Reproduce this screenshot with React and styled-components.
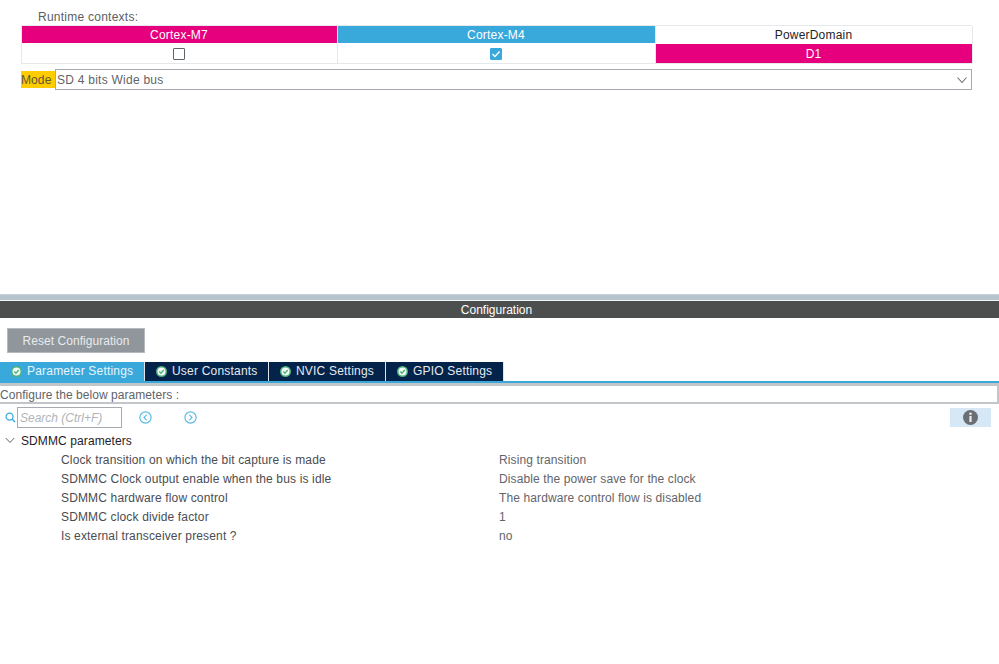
import React from "react";
import styled, { createGlobalStyle } from "styled-components";

const GlobalStyle = createGlobalStyle`
  html, body {
    margin: 0;
    padding: 0;
    background: #fff;
    font-family: "Liberation Sans", Arial, sans-serif;
    font-size: 12px;
    overflow: hidden;
  }
`;

const Page = styled.div`
  width: 999px;
  height: 664px;
  display: flex;
  flex-direction: column;
`;

const TopPanel = styled.section`
  height: 294px;
  padding: 10px 27px 0 21px;
  box-sizing: border-box;
`;

const ContextsLabel = styled.div`
  height: 15px;
  line-height: 15px;
  padding-left: 17px;
  color: #5a5f63;
  letter-spacing: 0.25px;
`;

const ContextTable = styled.div`
  display: grid;
  grid-template-columns: 316px 318px 317px;
  grid-template-rows: 17px 20px;
  box-sizing: border-box;
  border: 1px solid #e6e9ec;
  width: 951px;
  height: 39px;
`;

const Cell = styled.div`
  display: flex;
  align-items: center;
  justify-content: center;
  padding-right: 1px;
  background: ${(p) => p.$bg || "#fff"};
  background-clip: padding-box;
  color: ${(p) => p.$color || "#fff"};
  border-right: 1px solid #e6e9ec;
  border-top: ${(p) => (p.$gap ? "1px solid #fff" : "0")};
  box-sizing: border-box;
  letter-spacing: 0.2px;
`;

const CheckBox = styled.span`
  display: flex;
  align-items: center;
  justify-content: center;
  width: 12px;
  height: 12px;
  box-sizing: border-box;
  border: 1px solid ${(p) => (p.$on ? "#39a9dc" : "#5f6468")};
  border-radius: 1px;
  background: ${(p) => (p.$on ? "#39a9dc" : "#fff")};
`;

const ModeRow = styled.div`
  display: flex;
  align-items: center;
  margin-top: 5px;
  width: 951px;
  height: 21px;
`;

const ModeLabel = styled.div`
  width: 34px;
  height: 17px;
  line-height: 18px;
  background: #ffcc00;
  color: #5c5a3a;
  letter-spacing: 0.1px;
`;

const ModeSelect = styled.div`
  flex: 1;
  height: 21px;
  box-sizing: border-box;
  display: flex;
  align-items: center;
  justify-content: space-between;
  border: 1px solid #a5abb0;
  padding: 1px 3px 0 1px;
  color: #5f6468;
  letter-spacing: 0.25px;
`;

const Divider = styled.div`
  height: 7px;
  box-sizing: border-box;
  background: #b8c4cc;
  border-top: 1px solid #c9d2d8;
  border-bottom: 1px solid #f0f2f3;
`;

const ConfigBar = styled.div`
  height: 17px;
  line-height: 19px;
  background: #4d4f4e;
  color: #fff;
  text-align: center;
  padding-right: 6px;
`;

const ResetButton = styled.button`
  display: block;
  width: 138px;
  height: 25px;
  margin: 10px 0 9px 7px;
  padding: 1px 0 0;
  border: 1px solid #b4b9be;
  background: #8f969c;
  color: #e9ebed;
  font: 12px "Liberation Sans", Arial, sans-serif;
  letter-spacing: 0.05px;
`;

const TabStrip = styled.div`
  display: flex;
  height: 19px;
  border-bottom: 2px solid #39a9dc;
`;

const Tab = styled.div`
  display: flex;
  align-items: center;
  gap: 5px;
  box-sizing: border-box;
  width: ${(p) => p.$w}px;
  padding: 0 0 1px ${(p) => p.$pad}px;
  background: ${(p) => (p.$active ? "#39a9dc" : "#03234b")};
  color: ${(p) => (p.$active ? "#e8f5fb" : "#e6eaee")};
  border-right: 1px solid #dfe4e8;
  letter-spacing: 0.2px;
`;

const ConfigureRow = styled.div`
  height: 21px;
  line-height: 19px;
  box-sizing: border-box;
  border-top: 3px solid #c3c6c8;
  border-bottom: 2px solid #c3c6c8;
  border-right: 2px solid #c3c6c8;
  color: #5f6468;
  letter-spacing: 0.05px;
`;

const SearchRow = styled.div`
  display: flex;
  align-items: center;
  height: 27px;
  padding: 0 8px 0 5px;
`;

const SearchBox = styled.div`
  width: 105px;
  height: 21px;
  line-height: 20px;
  box-sizing: border-box;
  margin-left: 1px;
  padding-left: 2px;
  border: 1px solid #a5abb0;
  color: #b0b4b8;
  font-style: italic;
`;

const NavIcon = styled.svg`
  margin-left: ${(p) => p.$gap}px;
`;

const InfoButton = styled.div`
  margin-left: auto;
  width: 41px;
  height: 19px;
  display: flex;
  align-items: center;
  justify-content: center;
  background: #d6e7f5;
`;

const GroupHeader = styled.div`
  display: flex;
  align-items: center;
  height: 20px;
  padding: 0 0 1px 5px;
  box-sizing: border-box;
  gap: 6px;
  color: #1f2226;
  letter-spacing: 0.1px;
`;

const ParamRow = styled.div`
  display: grid;
  grid-template-columns: 438px 1fr;
  height: 19px;
  line-height: 19px;
  padding-left: 61px;
  color: #4a4c52;
  letter-spacing: 0.15px;
`;

const ParamValue = styled.span`
  color: #62656a;
  letter-spacing: 0.11px;
`;

const StatusIcon = () => (
  <svg width="11" height="11" viewBox="0 0 11 11">
    <circle cx="5.5" cy="5.5" r="5.5" fill="#4cb27a" />
    <circle cx="5.5" cy="5.5" r="4" fill="#f2faf6" />
    <path d="M3.3 5.6l1.6 1.6 2.9-3.1" fill="none" stroke="#4cb27a" strokeWidth="1.4" />
  </svg>
);

const ArrowIcon = ({ dir, gap }) => (
  <NavIcon $gap={gap} width="13" height="13" viewBox="0 0 13 13">
    <circle cx="6.5" cy="6.5" r="5.6" fill="none" stroke="#5cbce6" strokeWidth="1.2" />
    <path
      d={dir === "left" ? "M7.6 3.9L5 6.5l2.6 2.6" : "M5.4 3.9L8 6.5 5.4 9.1"}
      fill="none"
      stroke="#5cbce6"
      strokeWidth="1.2"
    />
  </NavIcon>
);

const tabs = [
  { label: "Parameter Settings", w: 145, pad: 11, active: true },
  { label: "User Constants", w: 124, pad: 11 },
  { label: "NVIC Settings", w: 117, pad: 11 },
  { label: "GPIO Settings", w: 118, pad: 11 },
];

const params = [
  ["Clock transition on which the bit capture is made", "Rising transition"],
  ["SDMMC Clock output enable when the bus is idle", "Disable the power save for the clock"],
  ["SDMMC hardware flow control", "The hardware control flow is disabled"],
  ["SDMMC clock divide factor", "1"],
  ["Is external transceiver present ?", "no"],
];

export default function App() {
  return (
    <Page>
      <GlobalStyle />
      <TopPanel>
        <ContextsLabel>Runtime contexts:</ContextsLabel>
        <ContextTable>
          <Cell $bg="#e6007e">Cortex-M7</Cell>
          <Cell $bg="#39a9dc">Cortex-M4</Cell>
          <Cell $color="#1f2226">PowerDomain</Cell>
          <Cell $gap>
            <CheckBox />
          </Cell>
          <Cell $gap>
            <CheckBox $on>
              <svg width="10" height="10" viewBox="0 0 10 10">
                <path d="M1.5 5l2.4 2.4L8.6 2.4" fill="none" stroke="#fff" strokeWidth="1.4" />
              </svg>
            </CheckBox>
          </Cell>
          <Cell $gap $bg="#e6007e">D1</Cell>
        </ContextTable>
        <ModeRow>
          <ModeLabel>Mode</ModeLabel>
          <ModeSelect>
            SD 4 bits Wide bus
            <svg width="12" height="8" viewBox="0 0 12 8">
              <path d="M1.5 1.5L6 6.5l4.5-5" fill="none" stroke="#6a6f73" strokeWidth="1.1" />
            </svg>
          </ModeSelect>
        </ModeRow>
      </TopPanel>
      <Divider />
      <ConfigBar>Configuration</ConfigBar>
      <ResetButton>Reset Configuration</ResetButton>
      <TabStrip>
        {tabs.map((t) => (
          <Tab key={t.label} $w={t.w} $pad={t.pad} $active={t.active}>
            <StatusIcon />
            {t.label}
          </Tab>
        ))}
      </TabStrip>
      <ConfigureRow>Configure the below parameters :</ConfigureRow>
      <SearchRow>
        <svg width="11" height="11" viewBox="0 0 12 12">
          <circle cx="5" cy="5" r="3.8" fill="none" stroke="#39a9dc" strokeWidth="1.4" />
          <path d="M7.8 7.8L11 11" stroke="#39a9dc" strokeWidth="1.6" />
        </svg>
        <SearchBox>Search (Ctrl+F)</SearchBox>
        <ArrowIcon dir="left" gap={17} />
        <ArrowIcon dir="right" gap={32} />
        <InfoButton>
          <svg width="15" height="15" viewBox="0 0 15 15">
            <circle cx="7.5" cy="7.5" r="7.5" fill="#6b6f73" />
            <circle cx="7.5" cy="3.8" r="1.3" fill="#e6eef5" />
            <rect x="6.4" y="6" width="2.2" height="6" fill="#e6eef5" />
          </svg>
        </InfoButton>
      </SearchRow>
      <GroupHeader>
        <svg width="10" height="7" viewBox="0 0 10 7">
          <path d="M.7 1L5 5.5 9.3 1" fill="none" stroke="#5f6468" strokeWidth="1" />
        </svg>
        SDMMC parameters
      </GroupHeader>
      {params.map(([name, value]) => (
        <ParamRow key={name}>
          <span>{name}</span>
          <ParamValue>{value}</ParamValue>
        </ParamRow>
      ))}
    </Page>
  );
}
